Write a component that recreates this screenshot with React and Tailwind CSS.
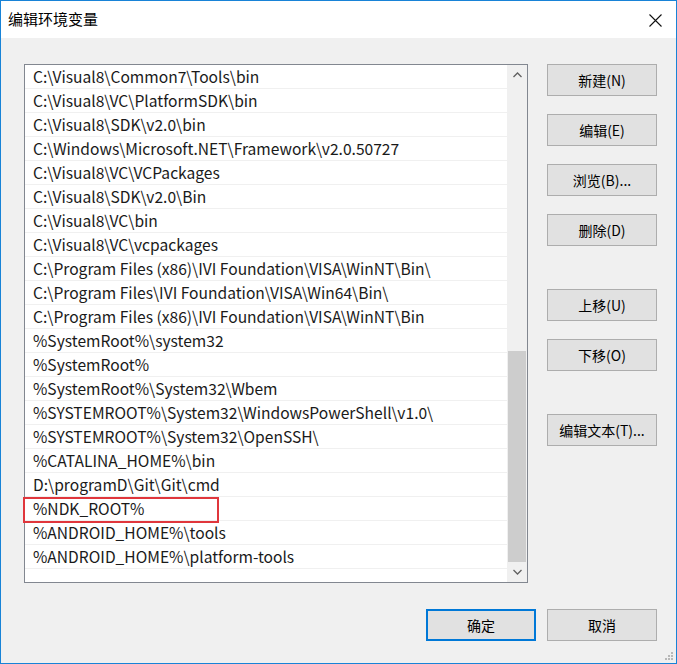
const paths = [
  "C:\\Visual8\\Common7\\Tools\\bin",
  "C:\\Visual8\\VC\\PlatformSDK\\bin",
  "C:\\Visual8\\SDK\\v2.0\\bin",
  "C:\\Windows\\Microsoft.NET\\Framework\\v2.0.50727",
  "C:\\Visual8\\VC\\VCPackages",
  "C:\\Visual8\\SDK\\v2.0\\Bin",
  "C:\\Visual8\\VC\\bin",
  "C:\\Visual8\\VC\\vcpackages",
  "C:\\Program Files (x86)\\IVI Foundation\\VISA\\WinNT\\Bin\\",
  "C:\\Program Files\\IVI Foundation\\VISA\\Win64\\Bin\\",
  "C:\\Program Files (x86)\\IVI Foundation\\VISA\\WinNT\\Bin",
  "%SystemRoot%\\system32",
  "%SystemRoot%",
  "%SystemRoot%\\System32\\Wbem",
  "%SYSTEMROOT%\\System32\\WindowsPowerShell\\v1.0\\",
  "%SYSTEMROOT%\\System32\\OpenSSH\\",
  "%CATALINA_HOME%\\bin",
  "D:\\programD\\Git\\Git\\cmd",
  "%NDK_ROOT%",
  "%ANDROID_HOME%\\tools",
  "%ANDROID_HOME%\\platform-tools",
];

const font = { fontFamily: '"Noto Sans CJK SC", "Noto Sans", sans-serif' };

function Btn({ children, className = "", primary = false }) {
  return (
    <button
      className={`h-[32px] w-[110px] bg-[#e1e1e1] text-[14px] text-black flex items-center justify-center ${
        primary ? "border-2 border-[#0078d7]" : "border border-[#adadad]"
      } ${className}`}
    >
      {children}
    </button>
  );
}

export default function App() {
  return (
    <div
      style={font}
      className="w-[677px] h-[664px] border border-[#1883d7] bg-[#f0f0f0] flex flex-col relative"
    >
      {/* Title bar */}
      <div className="h-[37px] bg-white flex items-center justify-between pl-[7px] pr-[14px] shrink-0">
        <span className="text-[15px] text-black">编辑环境变量</span>
        <svg width="13" height="13" viewBox="0 0 13 13" className="mt-[1px]">
          <path d="M0.5 0.5 L12.5 12.5 M12.5 0.5 L0.5 12.5" stroke="#111" strokeWidth="1.1" />
        </svg>
      </div>

      {/* Body */}
      <div className="flex pt-[26px] pl-[23px] pr-[19px]">
        <div className="w-[504px] h-[519px] bg-white border border-[#828790] flex">
          <div className="flex-1">
            {paths.map((p, i) => (
              <div
                key={i}
                className="h-[24px] flex items-center pl-[8px] text-[15.6px] text-[#1a1a1a] border-b border-[#f0f0f0] relative"
              >
                <span className="whitespace-nowrap">{p}</span>
                {i === 18 && (
                  <div className="absolute left-[-2px] top-0 w-[196px] h-[26px] border-2 border-[#e0363c]" />
                )}
              </div>
            ))}
          </div>
          {/* Scrollbar */}
          <div className="w-[20px] bg-[#f0f0f0] flex flex-col">
            <div className="h-[20px] flex items-center justify-center">
              <svg width="9" height="6" viewBox="0 0 9 6">
                <path d="M0.5 5 L4.5 1 L8.5 5" fill="none" stroke="#606060" strokeWidth="1.3" />
              </svg>
            </div>
            <div className="flex-1 flex flex-col justify-end">
              <div className="h-[211px] mx-[1px] bg-[#cdcdcd]" />
            </div>
            <div className="h-[20px] flex items-center justify-center">
              <svg width="9" height="6" viewBox="0 0 9 6">
                <path d="M0.5 1 L4.5 5 L8.5 1" fill="none" stroke="#606060" strokeWidth="1.3" />
              </svg>
            </div>
          </div>
        </div>

        {/* Side buttons */}
        <div className="ml-[19px] flex flex-col">
          <Btn>新建(N)</Btn>
          <Btn className="mt-[18px]">编辑(E)</Btn>
          <Btn className="mt-[18px]">浏览(B)...</Btn>
          <Btn className="mt-[18px]">删除(D)</Btn>
          <Btn className="mt-[43px]">上移(U)</Btn>
          <Btn className="mt-[18px]">下移(O)</Btn>
          <Btn className="mt-[43px]">编辑文本(T)...</Btn>
        </div>
      </div>

      {/* Footer */}
      <div className="flex justify-end gap-[11px] pr-[19px] mt-[26px]">
        <Btn primary>确定</Btn>
        <Btn>取消</Btn>
      </div>

      {/* Resize grip */}
      <svg width="10" height="10" viewBox="0 0 10 10" className="absolute right-[2px] bottom-[2px]">
        {[
          [7, 1],
          [4, 4],
          [7, 4],
          [1, 7],
          [4, 7],
          [7, 7],
        ].map(([x, y], i) => (
          <rect key={i} x={x} y={y} width="2" height="2" fill="#b8b8b8" />
        ))}
      </svg>
    </div>
  );
}
